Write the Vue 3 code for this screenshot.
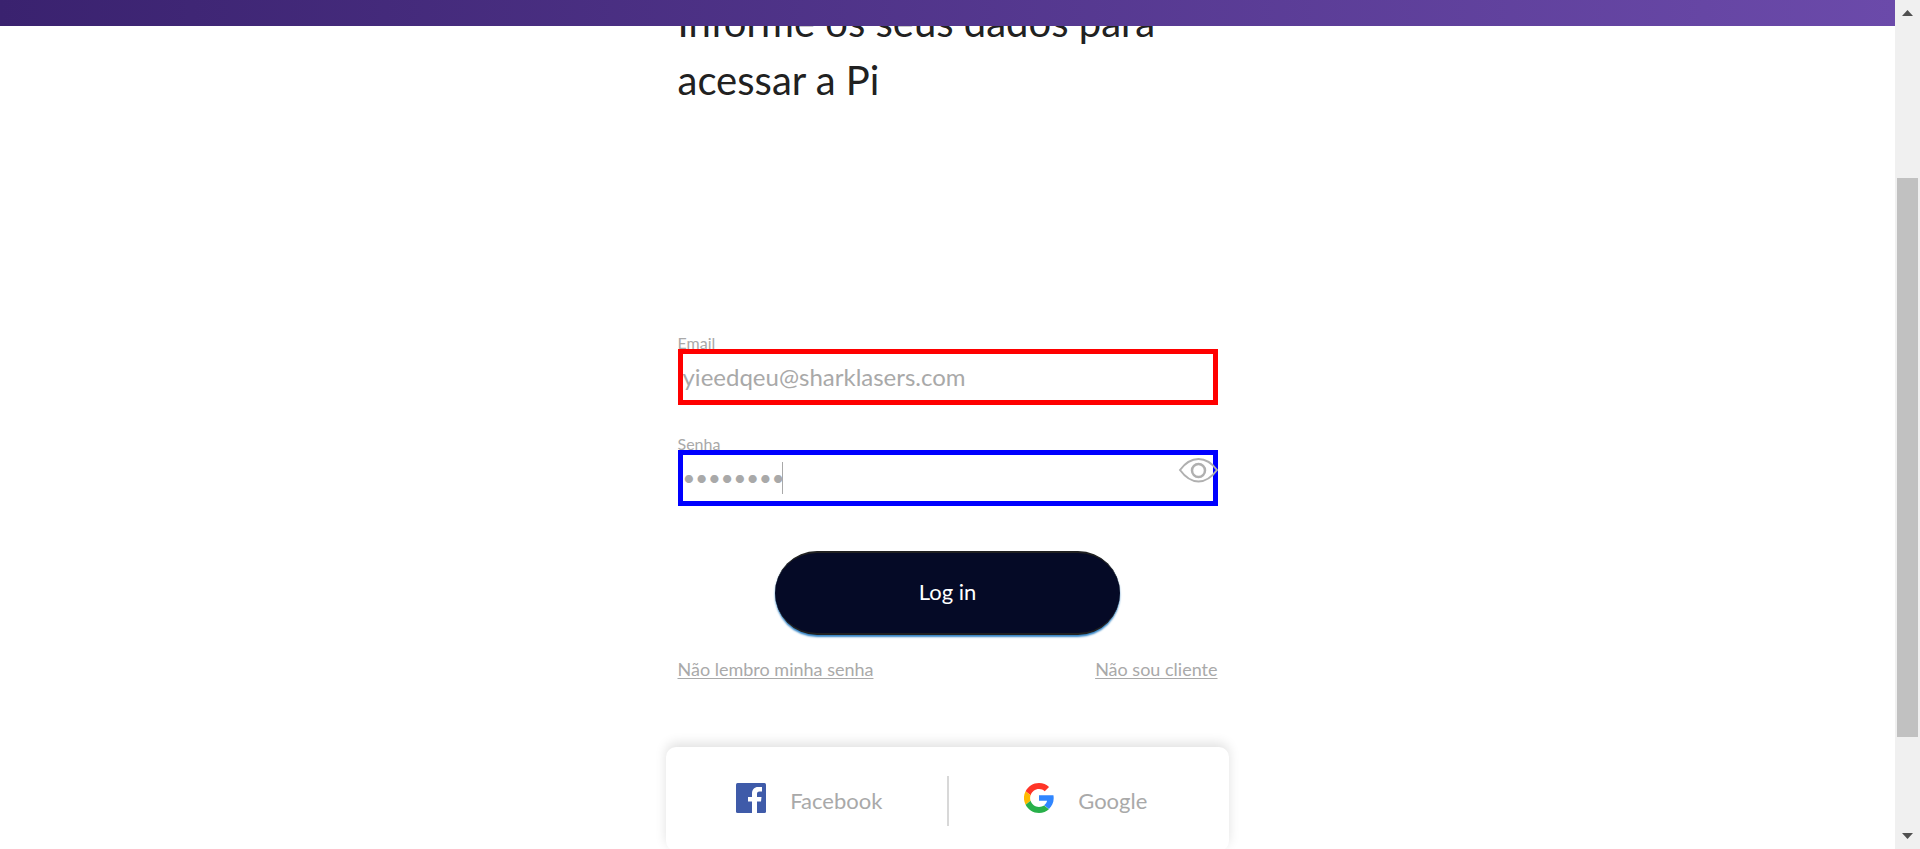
<script setup>
import { ref } from 'vue'

const email = ref('yieedqeu@sharklasers.com')
const password = ref('password')
</script>

<template>
  <div class="window">
    <div class="page">
      <header class="topbar"></header>
      <main class="content">
        <h1 class="title">Informe os seus dados para acessar a Pi</h1>
        <form class="form" @submit.prevent>
          <div class="field">
            <label for="email">Email</label>
            <input id="email" v-model="email" class="email" type="email" />
          </div>
          <div class="field">
            <label for="password">Senha</label>
            <input id="password" v-model="password" class="password" type="password" />
            <span class="caret"></span>
            <button class="reveal" type="button" aria-label="Mostrar senha">
              <svg viewBox="0 0 40 26" width="40" height="26" fill="none" stroke="#b0b0b0" stroke-width="2">
                <path d="M2 13C7.500 5.500 13.500 2 20.500 2S33.500 5.500 39 13C33.500 20.500 27.500 24.500 20.500 24.500S7.500 20.500 2 13Z" />
                <circle cx="20.500" cy="13.500" r="6.500" stroke-width="2.500" />
              </svg>
            </button>
          </div>
          <button class="login" type="submit">Log in</button>
        </form>
        <nav class="links">
          <a href="#">Não lembro minha senha</a>
          <a href="#">Não sou cliente</a>
        </nav>
        <section class="social">
          <button type="button">
            <svg viewBox="0 0 30 30" width="30" height="30">
              <rect width="30" height="30" rx="1.500" fill="#3f5ba9" />
              <path d="M16 30V18.500H12V14H16V10.500C16 6.500 18.500 4 22 4H26V8.500H23.500C21.500 8.500 21 9.500 21 11V14H25.500L25 18.500H21V30Z" fill="#fff" />
            </svg>
            <span>Facebook</span>
          </button>
          <span class="divider"></span>
          <button type="button">
            <svg viewBox="0 0 48 48" width="30" height="30">
              <path fill="#ff3527" d="M24 9.500c3.540 0 6.710 1.220 9.210 3.600l6.850-6.850C35.900 2.380 30.470 0 24 0 14.620 0 6.510 5.380 2.560 13.220l7.980 6.190C12.430 13.720 17.740 9.500 24 9.500z" />
              <path fill="#3086ff" d="M47.500 24.550c0-1.900-.15-3.600-.4-5.050H24v9.020h12.940c-.58 2.960-2.260 5.480-4.780 7.180l7.730 6C44.400 37.520 47.500 31.500 47.500 24.550z" />
              <path fill="#ffba00" d="M10.530 28.590A14.500 14.500 0 0 1 10.530 19.410l-7.980-6.190A24 24 0 0 0 2.560 34.780z" />
              <path fill="#28b04a" d="M24 48c6.480 0 11.930-2.130 15.890-5.810l-7.730-6c-2.150 1.450-4.920 2.300-8.160 2.300-6.260 0-11.570-4.220-13.470-9.910l-7.980 6.190C6.510 42.620 14.620 48 24 48z" />
            </svg>
            <span>Google</span>
          </button>
        </section>
      </main>
    </div>
    <div class="scrollbar" aria-hidden="true">
      <svg viewBox="0 0 11 6" width="11" height="6"><path d="M0 6L5.500 0L11 6Z" fill="#505050" /></svg>
      <div class="track"><div class="thumb"></div></div>
      <svg viewBox="0 0 11 6" width="11" height="6"><path d="M0 0L5.500 6L11 0Z" fill="#505050" /></svg>
    </div>
  </div>
</template>

<style>
html,
body {
  margin: 0;
  overflow: hidden;
}
</style>

<style scoped>
.window {
  display: flex;
  height: 100vh;
  overflow: hidden;
  background: #fff;
  font-family: Lato, "Open Sans", sans-serif;
  color: #a9a9a9;
}
* {
  box-sizing: border-box;
}
svg {
  display: block;
  flex: none;
}
button {
  font: inherit;
  border: 0;
  background: none;
  cursor: pointer;
}
.page {
  flex: 1;
  min-width: 0;
  position: relative;
  overflow: hidden;
}
.topbar {
  position: absolute;
  inset: 0 0 auto;
  height: 26px;
  z-index: 1;
  background: linear-gradient(90deg, #3a226f, #6b4aaa);
}
.content {
  display: flex;
  flex-direction: column;
  align-items: center;
  margin-top: -7px;
}
.title,
.form,
.links {
  width: 100%;
  max-width: 540px;
}
.title {
  margin: 0 0 226px;
  font-size: 40px;
  line-height: 58px;
  font-weight: 400;
  color: #212121;
}
.form {
  display: flex;
  flex-direction: column;
}
.field {
  position: relative;
  display: flex;
  flex-direction: column;
  margin-bottom: 31px;
}
label {
  height: 14px;
  font-size: 16px;
  line-height: 16px;
}
input {
  position: relative;
  width: 100%;
  height: 56px;
  padding: 0 0 2px;
  border: 5px solid;
  border-radius: 0;
  outline: 0;
  background: #fff;
  color: #a9a9a9;
  font: inherit;
  font-size: 24px;
}
.email {
  border-color: #f00;
}
.password {
  border-color: #00f;
  font-size: 22px;
}
.caret {
  position: absolute;
  left: 104px;
  top: 26px;
  width: 1px;
  height: 32px;
  background: #a9a9a9;
}
.reveal {
  position: absolute;
  right: 0;
  top: 21px;
  padding: 0;
}
.login {
  align-self: center;
  width: 345px;
  height: 84px;
  margin-top: 14px;
  padding-bottom: 4px;
  border: solid #212121;
  border-width: 2px 0;
  border-radius: 42px;
  background: #050a26;
  box-shadow: 0 2px 2px #3483c4;
  color: #fff;
  font-size: 22px;
}
.links {
  display: flex;
  justify-content: space-between;
  margin-top: 22px;
  font-size: 18px;
  line-height: 24px;
}
a {
  color: inherit;
  text-underline-offset: 2px;
}
.social {
  display: flex;
  justify-content: center;
  width: 100%;
  max-width: 563px;
  height: 104px;
  margin-top: 66px;
  padding: 29px 6px 0;
  border-radius: 10px;
  background: #fff;
  box-shadow: 0 -4px 12px rgba(0, 0, 0, 0.12);
}
.social button {
  flex: 1;
  display: flex;
  justify-content: center;
  gap: 24px;
  height: 50px;
  padding: 7px 0 0;
  color: #a9a9a9;
  font-size: 22px;
  line-height: 36px;
}
.divider {
  width: 2px;
  height: 50px;
  background: #d8d8d8;
}
.scrollbar {
  flex: none;
  display: flex;
  flex-direction: column;
  align-items: center;
  width: 25px;
  padding: 10px 0;
  background: #f0f0f0;
}
.track {
  flex: 1;
  display: flex;
  flex-direction: column;
  align-items: center;
  width: 100%;
  padding: 162px 0 96px;
}
.thumb {
  flex: 1;
  width: 21px;
  background: #c1c1c1;
}
</style>
